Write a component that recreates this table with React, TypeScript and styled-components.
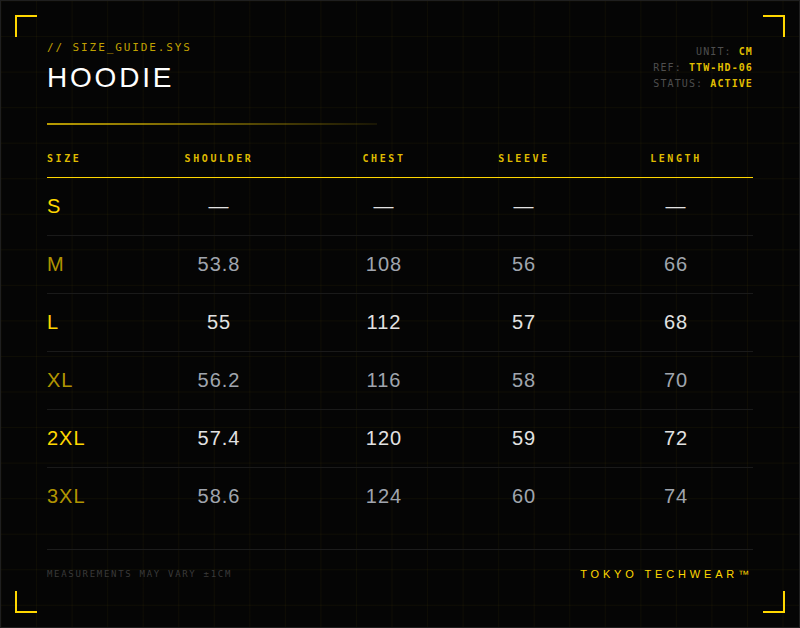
import styled, { createGlobalStyle } from 'styled-components';

const gold = '#FFD700';
const mono = `"DejaVu Sans Mono", "Liberation Mono", monospace`;
const sans = `"Liberation Sans", Arial, sans-serif`;

const GlobalStyle = createGlobalStyle`
  html, body {
    margin: 0;
    padding: 0;
    background: #050505;
  }
`;

const Card = styled.div`
  position: relative;
  box-sizing: border-box;
  width: 800px;
  height: 628px;
  padding: 40px 46px 0;
  border: 1px solid #1f1f1f;
  background-color: #050505;
  background-image:
    linear-gradient(rgba(255, 215, 0, 0.04) 1px, transparent 1px),
    linear-gradient(90deg, rgba(255, 215, 0, 0.04) 1px, transparent 1px);
  background-size: 35.56px 35.56px;
  background-position: -0.5px -0.5px;
  display: flex;
  flex-direction: column;
`;

const Corner = styled.span<{ $v: 'top' | 'bottom'; $h: 'left' | 'right' }>`
  position: absolute;
  width: 22px;
  height: 22px;
  box-sizing: border-box;
  ${p => p.$v}: 14px;
  ${p => p.$h}: 14px;
  border-${p => p.$v}: 2px solid ${gold};
  border-${p => p.$h}: 2px solid ${gold};
`;

const Header = styled.header`
  display: flex;
  justify-content: space-between;
  align-items: flex-start;
`;

const Label = styled.div`
  font-family: ${mono};
  font-size: 11px;
  line-height: 14px;
  letter-spacing: 1.9px;
  color: rgba(255, 215, 0, 0.75);
`;

const Title = styled.h1`
  margin: 6px 0 0;
  font-family: ${sans};
  font-weight: 400;
  font-size: 28px;
  line-height: 1.2;
  letter-spacing: 0.1em;
  color: #ffffff;
`;

const Meta = styled.div`
  margin-top: 3px;
  text-align: right;
  font-family: ${mono};
  font-size: 10px;
  line-height: 16px;
  letter-spacing: 1.1px;
  color: #4e4e4e;
`;

const MetaValue = styled.span`
  color: rgba(255, 215, 0, 0.9);
  font-weight: 700;
`;

const Divider = styled.div`
  margin-top: 28px;
  width: 330px;
  height: 2px;
  background: linear-gradient(90deg, rgba(255, 215, 0, 0.72), rgba(255, 215, 0, 0.08));
`;

const cols = '72px 200px 130px 150px 154px';

const HeadRow = styled.div`
  display: grid;
  grid-template-columns: ${cols};
  margin-top: 27px;
  padding-bottom: 11px;
  border-bottom: 1px solid ${gold};
`;

const HeadCell = styled.div<{ $left?: boolean }>`
  text-align: ${p => (p.$left ? 'left' : 'center')};
  font-family: ${mono};
  font-weight: 700;
  font-size: 10px;
  line-height: 14px;
  letter-spacing: 2.6px;
  color: rgba(255, 215, 0, 0.88);
`;

const Row = styled.div`
  display: grid;
  grid-template-columns: ${cols};
  align-items: center;
  height: 57px;
  border-bottom: 1px solid #1a1a1a;

  &:last-child {
    border-bottom: none;
  }
`;

const SizeCell = styled.div<{ $dim: boolean }>`
  font-family: ${sans};
  font-size: 20px;
  letter-spacing: 1px;
  color: ${p => (p.$dim ? 'rgba(255, 215, 0, 0.7)' : gold)};
`;

const ValueCell = styled.div<{ $dim: boolean }>`
  text-align: center;
  font-family: ${sans};
  font-size: 20px;
  letter-spacing: 1px;
  color: ${p => (p.$dim ? '#a0a5ae' : '#e2e2e2')};
`;

const Footer = styled.footer`
  margin-top: 24px;
  padding-top: 17px;
  border-top: 1px solid #1c1c1c;
  display: flex;
  justify-content: space-between;
  align-items: center;
`;

const Note = styled.div`
  font-family: ${mono};
  font-size: 9px;
  line-height: 14px;
  letter-spacing: 1.7px;
  color: #3a3a3a;
`;

const Brand = styled.div`
  font-family: ${sans};
  font-size: 11px;
  line-height: 14px;
  letter-spacing: 0.35em;
  color: ${gold};
`;

const sizes = [
  { size: 'S', values: ['—', '—', '—', '—'] },
  { size: 'M', values: ['53.8', '108', '56', '66'] },
  { size: 'L', values: ['55', '112', '57', '68'] },
  { size: 'XL', values: ['56.2', '116', '58', '70'] },
  { size: '2XL', values: ['57.4', '120', '59', '72'] },
  { size: '3XL', values: ['58.6', '124', '60', '74'] },
];

const heads = ['SHOULDER', 'CHEST', 'SLEEVE', 'LENGTH'];

export default function App() {
  return (
    <>
      <GlobalStyle />
      <Card>
        <Corner $v="top" $h="left" />
        <Corner $v="top" $h="right" />
        <Corner $v="bottom" $h="left" />
        <Corner $v="bottom" $h="right" />

        <Header>
          <div>
            <Label>// SIZE_GUIDE.SYS</Label>
            <Title>HOODIE</Title>
          </div>
          <Meta>
            <div>UNIT: <MetaValue>CM</MetaValue></div>
            <div>REF: <MetaValue>TTW-HD-06</MetaValue></div>
            <div>STATUS: <MetaValue>ACTIVE</MetaValue></div>
          </Meta>
        </Header>

        <Divider />

        <HeadRow>
          <HeadCell $left>SIZE</HeadCell>
          {heads.map(h => (
            <HeadCell key={h}>{h}</HeadCell>
          ))}
        </HeadRow>

        <div>
          {sizes.map((r, i) => (
            <Row key={r.size}>
              <SizeCell $dim={i % 2 === 1}>{r.size}</SizeCell>
              {r.values.map((v, j) => (
                <ValueCell key={j} $dim={i % 2 === 1}>{v}</ValueCell>
              ))}
            </Row>
          ))}
        </div>

        <Footer>
          <Note>MEASUREMENTS MAY VARY ±1CM</Note>
          <Brand>TOKYO TECHWEAR™</Brand>
        </Footer>
      </Card>
    </>
  );
}
